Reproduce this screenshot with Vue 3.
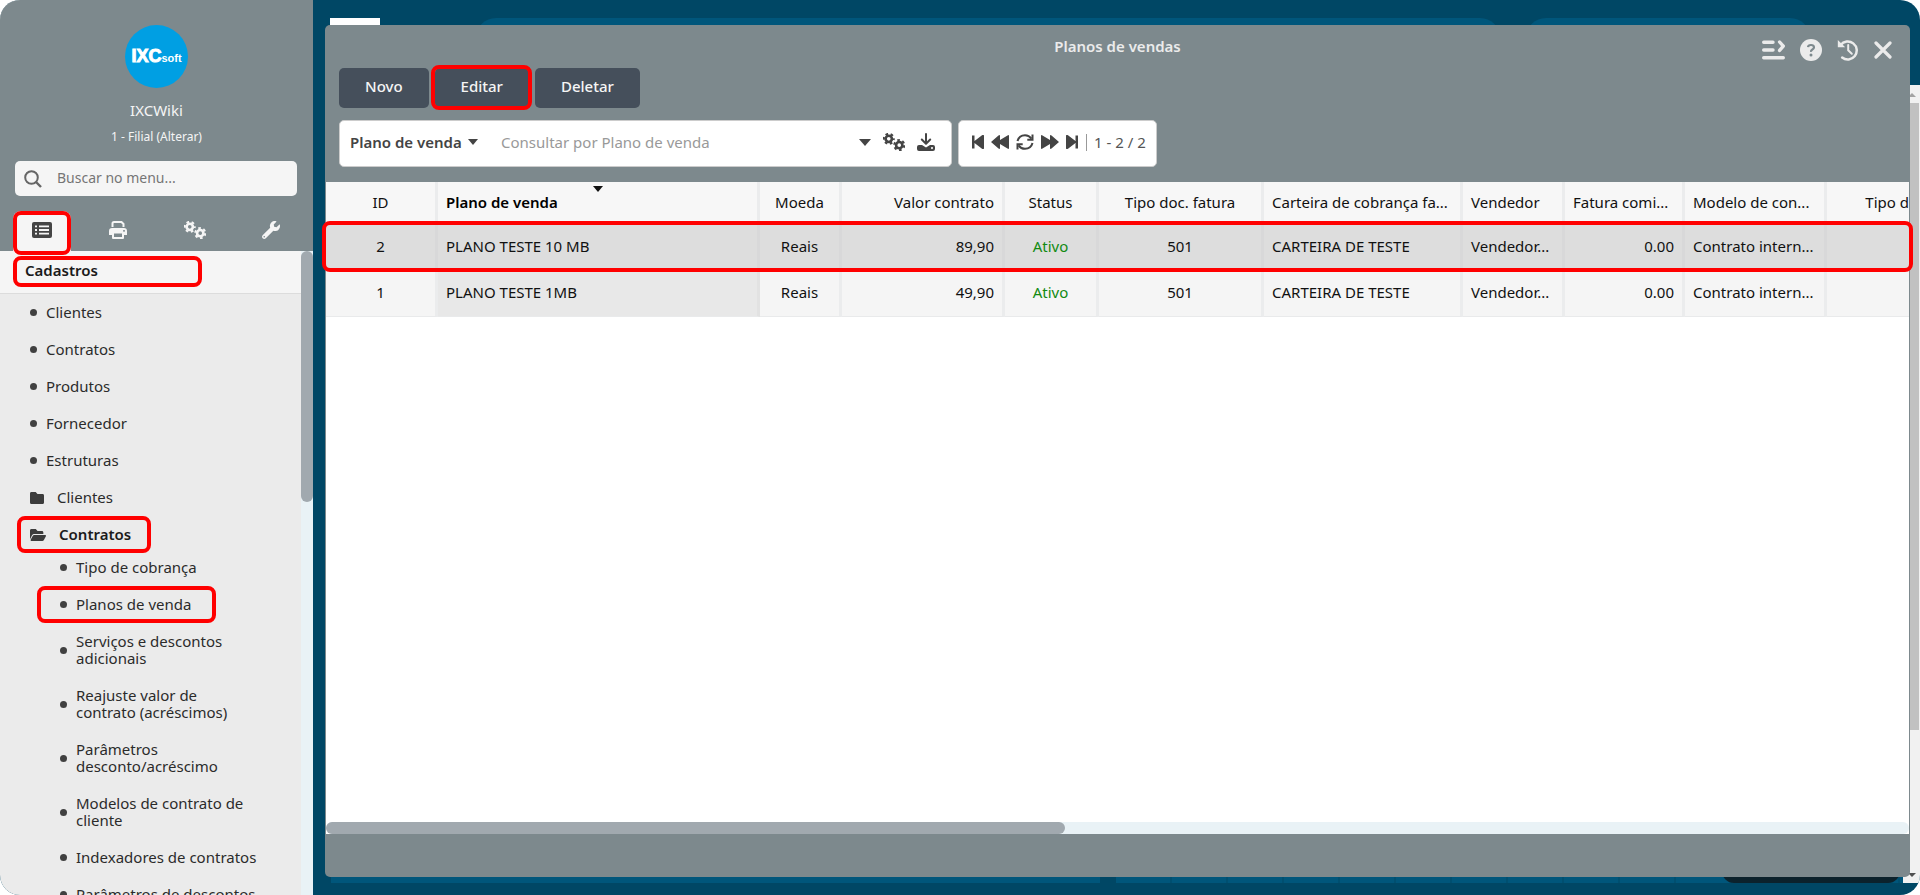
<script setup>
import { ref } from 'vue'

const search = ref('')
const query = ref('')
const field = ref('Plano de venda')

const links = ['Clientes', 'Contratos', 'Produtos', 'Fornecedor', 'Estruturas']
const contractLinks = [
  { label: 'Tipo de cobrança' },
  { label: 'Planos de venda', marked: true },
  { label: 'Serviços e descontos adicionais' },
  { label: 'Reajuste valor de contrato (acréscimos)' },
  { label: 'Parâmetros desconto/acréscimo' },
  { label: 'Modelos de contrato de cliente' },
  { label: 'Indexadores de contratos' },
  { label: 'Parâmetros de descontos' }
]

const columns = [
  { key: 'id', label: 'ID', align: 'center' },
  { key: 'plan', label: 'Plano de venda', align: 'left', sorted: true },
  { key: 'currency', label: 'Moeda', align: 'center' },
  { key: 'value', label: 'Valor contrato', align: 'right' },
  { key: 'status', label: 'Status', align: 'center' },
  { key: 'doc', label: 'Tipo doc. fatura', align: 'center' },
  { key: 'wallet', label: 'Carteira de cobrança fa...', align: 'left' },
  { key: 'seller', label: 'Vendedor', align: 'left' },
  { key: 'fee', label: 'Fatura comi...', align: 'left', cellAlign: 'right' },
  { key: 'model', label: 'Modelo de con...', align: 'left' },
  { key: 'type', label: 'Tipo d', align: 'right' }
]

const rows = [
  { id: '2', plan: 'PLANO TESTE 10 MB', currency: 'Reais', value: '89,90', status: 'Ativo', doc: '501', wallet: 'CARTEIRA DE TESTE', seller: 'Vendedor...', fee: '0.00', model: 'Contrato intern...', type: '' },
  { id: '1', plan: 'PLANO TESTE 1MB', currency: 'Reais', value: '49,90', status: 'Ativo', doc: '501', wallet: 'CARTEIRA DE TESTE', seller: 'Vendedor...', fee: '0.00', model: 'Contrato intern...', type: '' }
]
</script>

<template>
  <div class="app">
    <svg class="defs" aria-hidden="true">
      <symbol id="gears" viewBox="0 0 42 34">
        <g fill="none" stroke="currentColor">
          <circle cx="11" cy="11" r="6" stroke-width="5" />
          <circle cx="11" cy="11" r="9.5" stroke-width="4" stroke-dasharray="5 4.95" stroke-dashoffset="2.5" />
          <circle cx="31" cy="23" r="6" stroke-width="5" />
          <circle cx="31" cy="23" r="9.5" stroke-width="4" stroke-dasharray="5 4.95" />
        </g>
      </symbol>
    </svg>

    <aside class="sidebar">
      <header class="profile">
        <div class="logo"><b>IXC</b><small>soft</small></div>
        <div class="company">IXCWiki</div>
        <a class="branch" href="#">1 - Filial (Alterar)</a>
        <label class="search">
          <svg viewBox="0 0 18 18" width="18" height="18" aria-hidden="true">
            <g fill="none" stroke="currentColor" stroke-width="2"><circle cx="7.5" cy="7.5" r="6.3" /><path d="M12 12l5 5" stroke-width="2.4" /></g>
          </svg>
          <input v-model="search" type="text" placeholder="Buscar no menu..." aria-label="Buscar no menu" />
        </label>
        <nav class="tabs">
          <button class="tab active marked" aria-label="Cadastros">
            <svg viewBox="0 0 20 16" width="20" height="16">
              <rect width="20" height="16" rx="2" fill="currentColor" />
              <path d="M3 4.3h2M3 8h2M3 11.7h2M7 4.3h10M7 8h10M7 11.7h10" stroke="#f5f5f5" stroke-width="1.8" />
            </svg>
          </button>
          <button class="tab" aria-label="Relatórios">
            <svg viewBox="0 0 18 18" width="18" height="18">
              <path d="M3.500 6V2.500Q3.500 1 5 1h7.500l2 2V6" fill="none" stroke="currentColor" stroke-width="2" />
              <path fill="currentColor" fill-rule="evenodd" d="M3 7h12q3 0 3 3v3.500q0 .5-.5.5H15v3q0 1-1 1H4q-1 0-1-1v-3H.5q-.5 0-.5-.5V10q0-3 3-3zM5 12.500V16h8v-3.500zM15 9a.9.9 0 1 0 .01 0z" />
            </svg>
          </button>
          <button class="tab" aria-label="Configurações"><svg width="22" height="18"><use href="#gears" /></svg></button>
          <button class="tab" aria-label="Ferramentas">
            <svg viewBox="0 0 512 512" width="18" height="18">
              <path fill="currentColor" d="M507.730 109.100c-2.240-9.030-13.540-12.090-20.120-5.510l-74.360 74.360-67.880-11.310-11.310-67.880 74.360-74.360c6.620-6.620 3.430-17.900-5.660-20.160-47.380-11.740-99.550.91-136.580 37.930-39.640 39.640-50.550 97.100-34.050 147.200L18.740 402.760c-24.990 24.990-24.990 65.510 0 90.500 24.990 24.990 65.510 24.990 90.500 0l213.210-213.210c50.120 16.710 107.470 5.680 147.370-34.220 37.070-37.070 49.700-89.320 37.910-136.730zM64 472c-13.250 0-24-10.750-24-24 0-13.260 10.750-24 24-24s24 10.740 24 24c0 13.250-10.750 24-24 24z" />
            </svg>
          </button>
        </nav>
      </header>

      <div class="menu">
        <div class="menu-body">
          <h2 class="menu-title"><span class="marked">Cadastros</span></h2>
          <ul class="list">
            <li v-for="item in links" :key="item"><i class="dot"></i><a href="#">{{ item }}</a></li>
            <li class="folder">
              <svg viewBox="0 64 512 384" width="14" height="12" preserveAspectRatio="none" aria-hidden="true"><path fill="currentColor" d="M464 128H272l-64-64H48C21.490 64 0 85.490 0 112v288c0 26.510 21.490 48 48 48h416c26.510 0 48-21.490 48-48V176c0-26.510-21.490-48-48-48z" /></svg>
              <a href="#">Clientes</a>
            </li>
            <li class="folder open">
              <svg viewBox="0 64 576 384" width="16" height="12" preserveAspectRatio="none" aria-hidden="true"><path fill="currentColor" d="M572.694 292.093L500.270 416.248A63.997 63.997 0 0 1 444.989 448H45.025c-18.523 0-30.064-20.093-20.731-36.093l72.424-124.155A64 64 0 0 1 152 256h399.964c18.523 0 30.064 20.093 20.730 36.093zM152 224h328v-48c0-26.510-21.490-48-48-48H272l-64-64H48C21.490 64 0 85.490 0 112v278.046l69.077-118.418C86.214 242.250 117.989 224 152 224z" /></svg>
              <a href="#">Contratos</a>
            </li>
          </ul>
          <ul class="list sub">
            <li v-for="item in contractLinks" :key="item.label" :class="{ highlighted: item.marked }"><i class="dot"></i><a href="#">{{ item.label }}</a></li>
          </ul>
        </div>
        <div class="menu-track"><div class="menu-thumb"></div></div>
      </div>
    </aside>

    <main class="desktop">
      <div class="backdrop" aria-hidden="true">
        <div class="top-shapes"><i class="tile"></i><i class="pill wide"></i><i class="pill"></i></div>
        <div class="bottom-shapes"><i class="block"></i><i class="block ruled"></i><i class="chip"></i></div>
        <div class="page-track"><i class="up"></i><i class="page-thumb"></i><i class="down"></i></div>
      </div>

      <section class="window">
        <header class="window-head">
          <div class="titlebar">
            <h1>Planos de vendas</h1>
            <div class="window-tools">
              <button aria-label="Menu lateral">
                <svg viewBox="0 0 23 20" width="23" height="20"><g fill="none" stroke="currentColor" stroke-width="3.400" stroke-linecap="round" stroke-linejoin="round"><path d="M1.700 2.200H11M1.700 10H11M1.700 17.700h19.600M17.600 2l3.700 4.200-3.700 4.200" /></g></svg>
              </button>
              <button aria-label="Ajuda">
                <svg viewBox="0 0 22 22" width="22" height="22"><circle cx="11" cy="11" r="11" fill="currentColor" /><path d="M8 8.200Q8.200 6 11 6t3 2.300Q14 9.600 12.400 10.500T11 12.800" fill="none" stroke="#7d898d" stroke-width="2.200" /><circle cx="11" cy="15.900" r="1.500" fill="#7d898d" /></svg>
              </button>
              <button aria-label="Histórico">
                <svg viewBox="0 0 22 22" width="22" height="22"><path d="M3.600 6A9 9 0 1 1 5.200 18.600" fill="none" stroke="currentColor" stroke-width="2.500" stroke-linecap="round" /><path d="M.8 1v7.200h7.400z" fill="currentColor" /><path d="M11.200 6v5.300l3.600 3.400" fill="none" stroke="currentColor" stroke-width="2" stroke-linecap="round" /></svg>
              </button>
              <button aria-label="Fechar">
                <svg viewBox="0 0 18 18" width="18" height="18"><path d="M2 2l14 14M16 2L2 16" stroke="currentColor" stroke-width="3.200" stroke-linecap="round" /></svg>
              </button>
            </div>
          </div>
          <div class="actions">
            <button>Novo</button>
            <button class="marked">Editar</button>
            <button>Deletar</button>
          </div>
          <div class="filters">
            <div class="box query">
              <label class="field">
                <select v-model="field" aria-label="Campo de consulta"><option>Plano de venda</option></select>
                <i class="caret"></i>
              </label>
              <input v-model="query" type="text" placeholder="Consultar por Plano de venda" aria-label="Consultar" />
              <button aria-label="Opções"><i class="caret big"></i></button>
              <button aria-label="Configurar"><svg width="22" height="18"><use href="#gears" /></svg></button>
              <button aria-label="Exportar">
                <svg viewBox="0 0 18 18" width="18" height="18"><path d="M9 1v9M4.800 6.500L9 10.700l4.200-4.200" fill="none" stroke="currentColor" stroke-width="2" stroke-linecap="round" stroke-linejoin="round" /><path fill="currentColor" fill-rule="evenodd" d="M2 12h3l4 2.500 4-2.500h3q2 0 2 2v2q0 2-2 2H2q-2 0-2-2v-2q0-2 2-2zm13 2a1 1 0 1 0 .01 0z" /></svg>
              </button>
            </div>
            <div class="box pager">
              <button aria-label="Primeira"><svg viewBox="0 0 12 14" width="12" height="14"><path fill="currentColor" d="M0 .5h2.500V6L10 .2Q12-.7 12 1v12q0 1.700-2 .8L2.500 8v5.500H0z" /></svg></button>
              <button aria-label="Anterior"><svg viewBox="0 0 18 14" width="18" height="14"><path fill="currentColor" d="M0 7L7.500.5Q9-.5 9 1v4L16.500.5Q18-.5 18 1v12q0 1.500-1.500.5L9 9v4q0 1.500-1.500.5z" /></svg></button>
              <button aria-label="Atualizar"><svg viewBox="0 0 18 16" width="18" height="16"><g fill="none" stroke="currentColor" stroke-width="2"><path d="M1.500 7Q3 1.300 9 1.200q4 0 6.500 3.500M16.500 9Q15 14.700 9 14.800q-4 0-6.500-3.500" /><path d="M16.500.5v5.200h-5.200M1.500 15.500v-5.200h5.200" /></g></svg></button>
              <button aria-label="Próxima"><svg class="flip" viewBox="0 0 18 14" width="18" height="14"><path fill="currentColor" d="M0 7L7.500.5Q9-.5 9 1v4L16.500.5Q18-.5 18 1v12q0 1.500-1.500.5L9 9v4q0 1.500-1.500.5z" /></svg></button>
              <button aria-label="Última"><svg class="flip" viewBox="0 0 12 14" width="12" height="14"><path fill="currentColor" d="M0 .5h2.500V6L10 .2Q12-.7 12 1v12q0 1.700-2 .8L2.500 8v5.500H0z" /></svg></button>
              <span class="count">1 - 2 / 2</span>
            </div>
          </div>
        </header>

        <div class="grid">
          <table>
            <colgroup><col v-for="c in columns" :key="c.key" :class="'c-' + c.key" /></colgroup>
            <thead>
              <tr>
                <th v-for="c in columns" :key="c.key" :class="[c.align, 'k-' + c.key, { sorted: c.sorted }]">{{ c.label }}<i v-if="c.sorted" class="sort"></i></th>
              </tr>
            </thead>
            <tbody>
              <tr v-for="(r, i) in rows" :key="r.id" :class="{ selected: i === 0 }">
                <td v-for="c in columns" :key="c.key" :class="[c.cellAlign || c.align, 'k-' + c.key]">{{ r[c.key] }}</td>
              </tr>
            </tbody>
          </table>
          <div class="row-mark"></div>
          <div class="h-track"><div class="h-thumb"></div></div>
        </div>
        <footer class="window-foot"></footer>
      </section>
    </main>
  </div>
</template>

<style>
html, body { height: 100%; margin: 0; background: #fff; }
</style>

<style scoped>
* { box-sizing: border-box; }
.app {
  display: flex; height: 100vh; overflow: hidden; border-radius: 20px;
  background: #004765; color: #2b2b2b;
  font: 15px/20px "Noto Sans", "Open Sans", sans-serif;
}
.defs { position: absolute; width: 0; height: 0; }
a { color: inherit; text-decoration: none; }
button, input, select { font: inherit; color: inherit; border: 0; background: none; padding: 0; margin: 0; outline: 0; }
button { display: flex; align-items: center; justify-content: center; }
svg { display: block; flex: none; }
ul { list-style: none; margin: 0; padding: 0; }
.marked, .highlighted, .open { position: relative; }
.marked::after, .highlighted::after, .open::after, .row-mark {
  content: ""; position: absolute; border: 4px solid #f00; border-radius: 8px; pointer-events: none;
}

/* sidebar */
.sidebar { width: 313px; flex: none; display: flex; flex-direction: column; background: #ebebeb; }
.profile { display: flex; flex-direction: column; align-items: center; background: #7d898d; color: #f5f5f5; padding-top: 25px; }
.logo {
  width: 63px; height: 63px; border-radius: 50%; background: #009fe3; color: #fff;
  display: flex; align-items: baseline; justify-content: center; padding-top: 21px;
  font-family: "Liberation Sans", Arial, sans-serif;
}
.logo b { font-size: 18px; -webkit-text-stroke: 1px #fff; }
.logo small { font-size: 11px; font-weight: bold; }
.company { margin-top: 12px; }
.branch { margin-top: 8px; font-size: 12px; line-height: 18px; }
.search {
  display: flex; align-items: center; gap: 15px; align-self: stretch; height: 35px; margin: 15px 16px 0 15px;
  padding: 0 9px; border-radius: 5px; background: #f5f5f5; color: #666;
}
.search input { flex: 1; min-width: 0; padding-bottom: 2px; font-size: 14px; }
.search input::placeholder { color: #757575; opacity: 1; }
.tabs { display: flex; align-self: stretch; justify-content: space-between; height: 40px; margin: 15px 13px 0; }
.tab { width: 58px; padding-bottom: 3px; }
.tab.active { background: #f5f5f5; color: #444; border-radius: 8px 8px 0 0; }
.tab.active::after { inset: 0 0 -4px; }
.menu { flex: 1; min-height: 0; display: flex; }
.menu-body { flex: 1; overflow: hidden; }
.menu-title {
  margin: 0; height: 43px; padding: 9px 25px; background: #f5f5f5; border-bottom: 1px solid #dcdcdc;
  font-size: 15px; line-height: 20px; font-weight: 600; color: #1b1b1b;
}
.menu-title .marked { display: block; }
.menu-title .marked::after { inset: -4px 74px -7px -12px; }
.list li { display: flex; align-items: center; gap: 9px; padding: 10px 60px 10px 30px; line-height: 17px; }
.dot { width: 7px; height: 7px; border-radius: 50%; background: #404040; flex: none; }
.folder svg { color: #3c3c3c; }
.list .folder { gap: 13px; }
.list .open { font-weight: 600; color: #1b1b1b; }
.open::after { inset: 0 150px 0 17px; }
.list.sub { margin-top: -4px; }
.list.sub li { padding: 10px 42px 10px 60px; }
.highlighted::after { inset: 0 85px 0 37px; }
.menu-track { width: 12px; background: #e9f2f6; }
.menu-thumb { height: 39%; border-radius: 6px; background: #a1a9af; }

/* desktop behind the window */
.desktop { flex: 1; min-width: 0; position: relative; padding: 25px 10px 18px 12px; display: flex; }
.backdrop { position: absolute; inset: 0; }
.top-shapes, .bottom-shapes { position: absolute; display: flex; }
.top-shapes { top: 18px; left: 17px; right: 110px; height: 40px; gap: 26px; }
.tile { width: 50px; background: #fff; }
.pill { flex: 0 0 284px; border-radius: 30px; background: #00567b; }
.pill.wide { flex: 1; margin-left: 70px; }
.bottom-shapes { bottom: 12px; left: 18px; right: 17px; height: 40px; gap: 16px; }
.block { flex: 769 0 0; background: #00567b; }
.ruled { flex-grow: 787; background: repeating-linear-gradient(90deg, #00567b 0 54px, #004f70 54px 56px); }
.chip { position: absolute; right: 3px; bottom: 0; width: 178px; height: 30px; border-radius: 12px; background: #0c222c; }
.page-track {
  position: absolute; top: 85px; bottom: 12px; right: 0; width: 17px; background: #f1f1f1;
  display: flex; flex-direction: column; align-items: center; padding: 8px 0 6px;
}
.page-thumb { flex: 0 0 80%; width: 15px; margin-top: 6px; background: #c1c1c1; }
.up { border: 4px solid transparent; border-top: 0; border-bottom-color: #a3a3a3; }
.down { border: 4px solid transparent; border-bottom: 0; border-top-color: #505050; margin-top: auto; }

/* window */
.window { position: relative; flex: 1; min-width: 0; display: flex; flex-direction: column; border-radius: 5px; background: #7d898d; }
.window-head { height: 157px; padding: 0 14px; }
.titlebar { position: relative; height: 43px; text-align: center; }
h1 { margin: 0; padding-top: 11px; font-size: 15px; line-height: 20px; font-weight: 600; color: #ebebeb; }
.window-tools { position: absolute; top: 14px; right: 4px; display: flex; align-items: center; gap: 15px; color: #ebebeb; }
.actions { display: flex; gap: 6px; }
.actions button { height: 40px; padding: 0 26px 4px; border-radius: 5px; background: #454f5b; color: #f5f5f5; font-weight: 500; }
.actions .marked::after { inset: -3px -3px -2px -4px; }
.filters { display: flex; gap: 6px; margin-top: 12px; color: #444; }
.box { display: flex; align-items: center; height: 47px; padding-bottom: 3px; border: 1px solid #ccc; border-radius: 5px; background: #fff; }
.query { width: 613px; padding-left: 10px; padding-right: 16px; gap: 12px; }
.field { display: flex; align-items: center; gap: 6px; font-weight: 600; }
.field select { appearance: none; }
.query input { flex: 1; min-width: 0; padding-left: 11px; }
.query input::placeholder { color: #999; opacity: 1; }
.caret { border: 5px solid transparent; border-top: 6px solid #444; border-bottom: 0; }
.caret.big { border-width: 7px 6px 0; }
.pager { padding-left: 13px; padding-right: 10px; gap: 7px; }
.flip { transform: scaleX(-1); }
.count { border-left: 1px solid #999; padding-left: 7px; margin-left: 1px; line-height: 17px; color: #555; }

.grid { position: relative; flex: 1; margin: 0 1px; background: #fff; min-height: 0; }
table { width: 100%; table-layout: fixed; border-collapse: separate; border-spacing: 0; color: #111; }
.c-id { width: 112px; } .c-plan { width: 322px; } .c-currency { width: 82px; } .c-value { width: 163px; }
.c-status { width: 94px; } .c-doc { width: 165px; } .c-wallet { width: 199px; } .c-seller { width: 102px; }
.c-fee { width: 120px; } .c-model { width: 142px; }
th, td { padding: 0 8px 4px; white-space: nowrap; overflow: hidden; font-weight: 400; border-right: 3px solid #ebeced; }
th { position: relative; height: 43px; background: #f7f7f7; }
td { height: 46px; background: #f5f5f5; border-bottom: 1px solid #e9eaeb; }
.left { text-align: left; } .center { text-align: center; } .right { text-align: right; }
.k-type { padding-left: 0; padding-right: 0; border-right: 0; }
.sorted { font-weight: 600; color: #000; }
.sort { position: absolute; top: 4px; left: 50%; margin-left: -5px; border: 5px solid transparent; border-top: 6px solid #111; border-bottom: 0; }
td.k-plan { background: #e8e8e8; border-right-color: #e2e2e2; }
td.k-status { color: #128a12; }
.selected td, .selected td.k-plan { background: #ddd; border-color: #d8d8d9; }
.row-mark { top: 39px; left: -4px; right: -4px; height: 51px; z-index: 1; }
.h-track { position: absolute; left: 0; right: 0; bottom: 0; height: 12px; border-radius: 6px; background: #e9f2f6; }
.h-thumb { width: 46.7%; height: 100%; border-radius: 6px; background: #a1a9af; }
.window-foot { height: 43px; }
</style>
